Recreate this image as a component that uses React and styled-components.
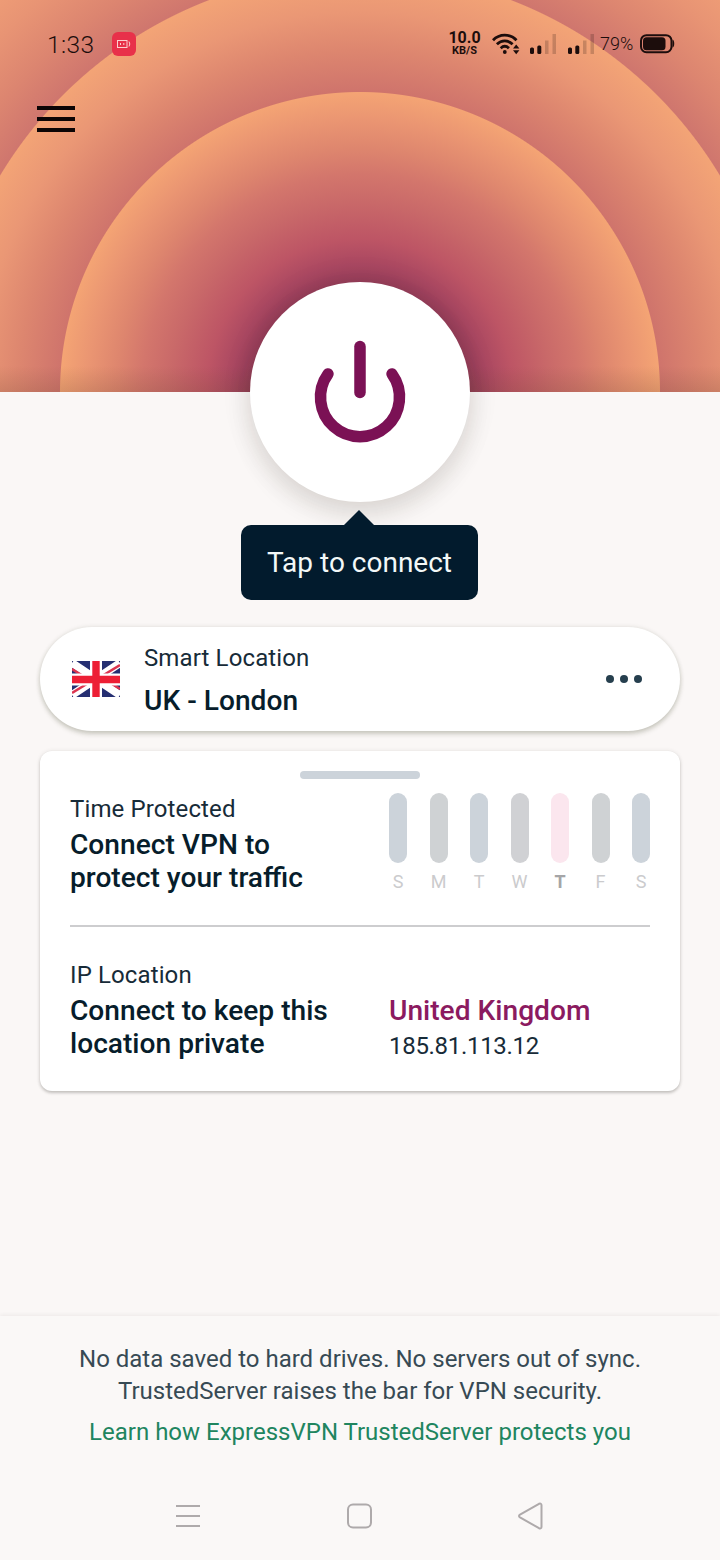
import styled, { createGlobalStyle } from "styled-components";

const GlobalStyle = createGlobalStyle`
    *{
        box-sizing:border-box;
    }
    body{
        margin:0;
        background:#faf7f6;
        font-family:Roboto, sans-serif;
        color:#071d2b;
    }
`;

const Screen = styled.div`
    width:720px;
    height:1560px;
    display:flex;
    flex-direction:column;
    background:#faf7f6;
    overflow:hidden;
`;

const Hero = styled.header`
    height:392px;
    flex-shrink:0;
    background:
        linear-gradient(to bottom, rgba(110,70,50,0) 366px, rgba(110,70,50,.2) 392px),
        radial-gradient(circle at 360px 392px,
            #8c3858 0, #953d5a 108px, #a94761 127px, #bd5565 153px, #c96969 190px,
            #d3766c 218px, #de866e 244px, #ea9572 272px, #f4a474 299.5px,
            #cf746c 300.5px, #dd866f 342px, #ea9775 380px, #f3a476 419.5px,
            #cf766e 420.5px, #dc8570 460px, #e89474 505px, #f1a077 550px);
`;

const StatusBar = styled.div`
    display:flex;
    align-items:center;
    height:88px;
    padding:0 45px 0 47px;
    color:#1c0d0c;
`;

const Clock = styled.div`
    font-size:24.5px;
    font-weight:300;
    letter-spacing:.4px;
    width:65px;
`;

const RecordBadge = styled.div`
    width:24px;
    height:24px;
    border-radius:6px;
    background:#e8314a;
    display:flex;
    align-items:center;
    justify-content:center;
`;

const StatusRight = styled.div`
    margin-left:auto;
    display:flex;
    align-items:center;
`;

const NetSpeed = styled.div`
    width:33px;
    margin-right:11px;
    text-align:center;
    font-weight:700;
    font-size:16px;
    line-height:14px;
`;

const Unit = styled.div`
    font-size:11px;
    line-height:12px;
`;

const Signals = styled.div`
    display:flex;
    gap:12px;
    margin:0 6px 0 10px;
`;

const Percent = styled.div`
    font-size:18px;
    font-weight:300;
    width:40px;
    padding-bottom:2px;
`;

const MenuButton = styled.button`
    display:flex;
    flex-direction:column;
    gap:7px;
    width:38px;
    margin:18px 0 0 37px;
    padding:0;
    border:0;
    background:none;
    span{
        height:4px;
        background:#0c0505;
    }
`;

const Connect = styled.section`
    display:flex;
    flex-direction:column;
    align-items:center;
    margin-top:-110px;
`;

const PowerButton = styled.button`
    width:220px;
    height:220px;
    padding:0;
    border:0;
    border-radius:50%;
    background:#fff;
    box-shadow:0 12px 24px rgba(40,35,20,.12), 0 0 34px rgba(40,35,20,.07);
    svg{
        display:block;
    }
`;

const Arrow = styled.div`
    width:30px;
    height:15px;
    margin-top:8px;
    margin-right:2px;
    background:#021b2d;
    clip-path:polygon(50% 0, 100% 100%, 0 100%);
`;

const Tooltip = styled.div`
    width:237px;
    height:75px;
    margin-right:1px;
    border-radius:10px;
    background:#021b2d;
    color:#f3f8f8;
    font-size:28px;
    line-height:75px;
    text-align:center;
`;

const LocationBar = styled.div`
    display:flex;
    align-items:center;
    height:104px;
    margin:27px 40px 0;
    padding:0 38px 0 32px;
    border-radius:52px;
    background:#fff;
    box-shadow:0 3px 5px rgba(50,55,25,.22), 0 0 5px rgba(50,55,25,.1);
`;

const Names = styled.div`
    flex:1;
    margin-left:24px;
`;

const Label = styled.div`
    font-size:24px;
    line-height:32px;
    letter-spacing:${props => props.$tight ? "-.3px" : ".12px"};
    color:#172b38;
`;

const Title = styled.div`
    font-size:28.15px;
    line-height:33px;
    font-weight:500;
    color:${props => props.$accent ? "#8b1a60" : "#071d2b"};
    margin-top:${props => props.$gap || 0}px;
    margin-bottom:${props => props.$accent ? 3 : 0}px;
`;

const Dots = styled.div`
    display:flex;
    gap:6px;
    span{
        width:8px;
        height:8px;
        border-radius:50%;
        background:#263f4e;
    }
`;

const Card = styled.div`
    height:340px;
    margin:20px 40px 0;
    padding:20px 30px 0;
    border-radius:12px;
    background:#fff;
    box-shadow:0 2px 3px rgba(50,45,40,.24), 0 0 4px rgba(50,45,40,.1);
`;

const Handle = styled.div`
    width:120px;
    height:8px;
    margin:0 auto;
    border-radius:4px;
    background:#ccd3da;
`;

const CardRow = styled.div`
    display:flex;
    justify-content:space-between;
    height:${props => props.$height}px;
`;

const Left = styled.div`
    padding-top:${props => props.$top}px;
`;

const Right = styled.div`
    width:261px;
    padding-top:${props => props.$top}px;
`;

const Week = styled.div`
    display:flex;
    justify-content:space-between;
`;

const Day = styled.div`
    width:18px;
    display:flex;
    flex-direction:column;
    align-items:center;
    font-size:18px;
    line-height:22px;
    font-weight:${props => props.$today ? 700 : 400};
    color:${props => props.$today ? "#a5a5a7" : "#cbcbcd"};
    &::before{
        content:"";
        width:18px;
        height:70px;
        margin-bottom:8px;
        border-radius:9px;
        background:${props => props.$color};
    }
`;

const Divider = styled.div`
    height:2px;
    background:#cdcdcf;
`;

const Footer = styled.footer`
    margin-top:auto;
    height:244px;
    display:flex;
    flex-direction:column;
    align-items:center;
    padding-top:27px;
    background:#faf8f7;
    box-shadow:0 -1px 4px rgba(60,40,40,.07);
    font-size:24px;
    line-height:32px;
    text-align:center;
    color:#374a54;
`;

const Learn = styled.a`
    margin-top:9px;
    color:#20855f;
`;

const NavBar = styled.nav`
    display:flex;
    justify-content:space-between;
    width:370px;
    margin-top:54px;
`;

const days = [
    { name: "S", color: "#ccd3da" },
    { name: "M", color: "#cfd2d4" },
    { name: "T", color: "#ccd3da" },
    { name: "W", color: "#d0d1d4" },
    { name: "T", color: "#fbe6ee", today: true },
    { name: "F", color: "#cfd2d4" },
    { name: "S", color: "#ccd3da" },
];

function Signal() {
    return (
        <svg width="26" height="20" viewBox="0 0 26 20" fill="#1c0d0c">
            <rect x="0" y="13.5" width="4" height="6.5" rx="1.5" />
            <rect x="7.3" y="11.5" width="4" height="8.5" rx="1.5" />
            <rect x="15" y="6.5" width="3.5" height="13.5" opacity=".2" />
            <rect x="22.5" y="0" width="3.5" height="20" opacity=".2" />
        </svg>
    );
}

function Wifi() {
    return (
        <svg width="28" height="22" viewBox="0 0 28 22" fill="none" stroke="#1c0d0c" strokeWidth="2.8">
            <path d="M1 7.2C7.5.4 18 .4 24.5 7.2" />
            <path d="M4.9 11.3c4.5-4.500 11.2-4.500 15.7 0" />
            <path d="M8.7 15.2c2.5-2.300 5.700-2.300 8.2 0" />
            <circle cx="12.8" cy="19" r="1.9" fill="#1c0d0c" stroke="none" />
            <path d="M21 15.400l3.200-4 3.200 4zM21 17.200l3.200 4 3.200-4z" fill="#1c0d0c" stroke="none" />
        </svg>
    );
}

function Battery() {
    return (
        <svg width="35" height="20" viewBox="0 0 35 20" fill="#1c0d0c">
            <rect x="1" y="1.2" width="30.5" height="17" rx="5.5" fill="none" stroke="#1c0d0c" strokeWidth="2" />
            <rect x="3" y="3.2" width="22.5" height="13" rx="3.5" />
            <path d="M32.5 5.500c2.300 1 2.300 7.200 0 8.200z" />
        </svg>
    );
}

function Flag() {
    return (
        <svg width="48" height="36" viewBox="0 0 48 36">
            <rect width="48" height="36" fill="#252f72" />
            <path d="M0 2L48 34M48 2L0 34" stroke="#fff" strokeWidth="8" />
            <path d="M0 8L11 15M37 21L48 28M48 4L30 15M18 21L0 32" stroke="#dc3550" strokeWidth="2.6" />
            <path d="M24 0V36M0 18.5H48" stroke="#fff" strokeWidth="12" />
            <path d="M24 0V36M0 18.5H48" stroke="#ed1f35" strokeWidth="7.4" />
        </svg>
    );
}

export default function App() {
    return (
        <Screen>
            <GlobalStyle />
            <Hero>
                <StatusBar>
                    <Clock>1:33</Clock>
                    <RecordBadge>
                        <svg width="14" height="8" viewBox="0 0 14 8" fill="none" stroke="#fbd0d0">
                            <rect x=".5" y=".5" width="9.5" height="7" />
                            <path d="M3.5 3v2M6.8 3v2M12 1.5q1.6 2.5 0 5" />
                        </svg>
                    </RecordBadge>
                    <StatusRight>
                        <NetSpeed>
                            10.0
                            <Unit>KB/S</Unit>
                        </NetSpeed>
                        <Wifi />
                        <Signals>
                            <Signal />
                            <Signal />
                        </Signals>
                        <Percent>79%</Percent>
                        <Battery />
                    </StatusRight>
                </StatusBar>
                <MenuButton aria-label="Menu"><span /><span /><span /></MenuButton>
            </Hero>

            <Connect>
                <PowerButton aria-label="Connect">
                    <svg width="220" height="220" viewBox="0 0 220 220" fill="none" stroke="#7b1155" strokeWidth="11.5" strokeLinecap="round">
                        <path d="M110 64.5V110.5" />
                        <path d="M78 92A39.5 39.5 0 1 0 142 92" />
                    </svg>
                </PowerButton>
                <Arrow />
                <Tooltip>Tap to connect</Tooltip>
            </Connect>

            <LocationBar>
                <Flag />
                <Names>
                    <Label>Smart Location</Label>
                    <Title $gap={10}>UK - London</Title>
                </Names>
                <Dots><span /><span /><span /></Dots>
            </LocationBar>

            <Card>
                <Handle />
                <CardRow $height={146}>
                    <Left $top={14}>
                        <Label>Time Protected</Label>
                        <Title $gap={3}>Connect VPN to<br />protect your traffic</Title>
                    </Left>
                    <Right $top={14}>
                        <Week>
                            {days.map((day, i) => (
                                <Day key={i} $color={day.color} $today={day.today}>{day.name}</Day>
                            ))}
                        </Week>
                    </Right>
                </CardRow>
                <Divider />
                <CardRow $height={160}>
                    <Left $top={32}>
                        <Label>IP Location</Label>
                        <Title $gap={3}>Connect to keep this<br />location private</Title>
                    </Left>
                    <Right $top={67}>
                        <Title $accent>United Kingdom</Title>
                        <Label $tight>185.81.113.12</Label>
                    </Right>
                </CardRow>
            </Card>

            <Footer>
                <div>
                    No data saved to hard drives. No servers out of sync.<br />
                    TrustedServer raises the bar for VPN security.
                </div>
                <Learn>Learn how ExpressVPN TrustedServer protects you</Learn>
                <NavBar>
                    <svg width="26" height="28" viewBox="0 0 26 28" stroke="#aeaaab" strokeWidth="2">
                        <path d="M1 4H25M1 14H25M1 24H25" />
                    </svg>
                    <svg width="26" height="28" viewBox="0 0 26 28" fill="none" stroke="#aeaaab" strokeWidth="2">
                        <rect x="2" y="2.5" width="23" height="23" rx="5" />
                    </svg>
                    <svg width="28" height="28" viewBox="0 0 28 28" fill="none" stroke="#aeaaab" strokeWidth="2" strokeLinejoin="round">
                        <path d="M3 12.7L22 1.8Q24.5 1 24.5 3.2V24.8Q24.5 27 22 26.2L3 15.3Q1 14 3 12.7Z" />
                    </svg>
                </NavBar>
            </Footer>
        </Screen>
    );
}
